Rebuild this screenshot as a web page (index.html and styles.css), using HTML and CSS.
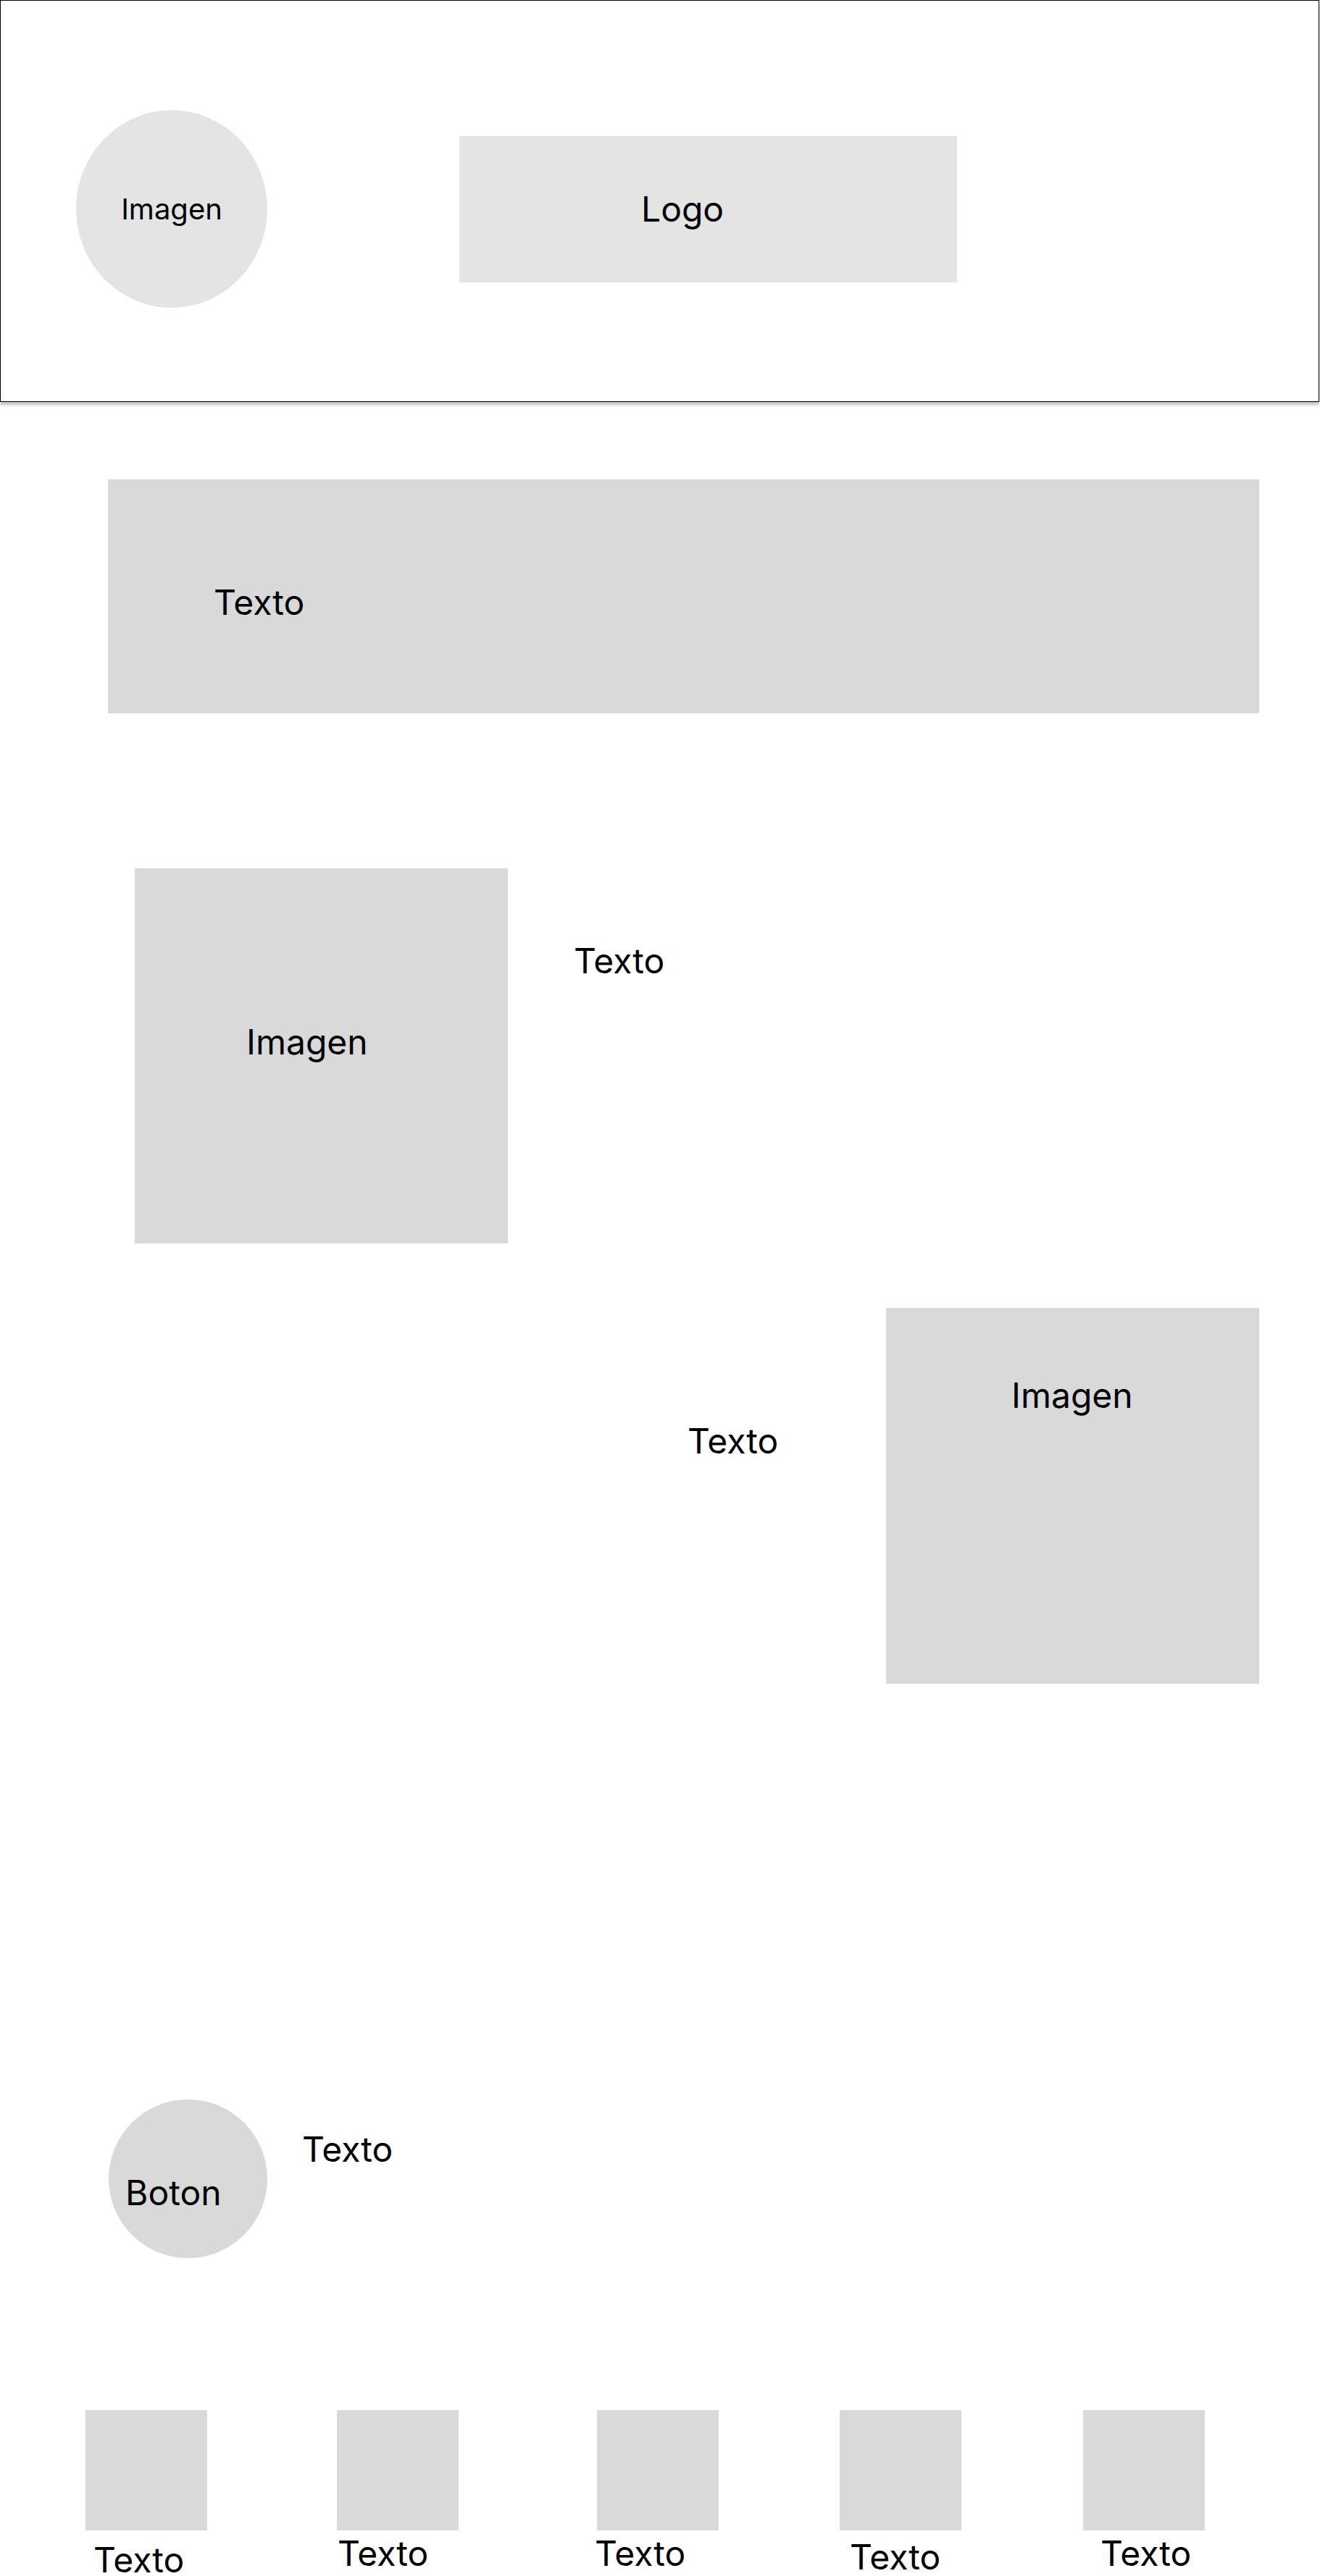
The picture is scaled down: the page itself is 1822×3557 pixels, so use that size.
FILE: index.html
```html
<!DOCTYPE html>
<html lang="es">
<head>
<meta charset="utf-8">
<title>Wireframe</title>
<link rel="stylesheet" href="styles.css">
</head>
<body>
<header class="topbar">
  <div class="avatar">Imagen</div>
  <div class="logo">Logo</div>
</header>
<main class="page">
  <section class="banner"><p class="txt">Texto</p></section>

  <section class="feature feature-left">
    <div class="media media-left"><p class="txt">Imagen</p></div>
    <p class="txt feature-text-left">Texto</p>
  </section>

  <section class="feature feature-right">
    <p class="txt feature-text-right">Texto</p>
    <div class="media media-right"><p class="txt">Imagen</p></div>
  </section>

  <section class="cta">
    <div class="cta-button"><span class="txt">Boton</span></div>
    <p class="txt cta-text">Texto</p>
  </section>

  <section class="gallery">
    <div class="gallery-item"><div class="thumb"></div><p class="txt caption">Texto</p></div>
    <div class="gallery-item"><div class="thumb"></div><p class="txt caption">Texto</p></div>
    <div class="gallery-item"><div class="thumb"></div><p class="txt caption">Texto</p></div>
    <div class="gallery-item"><div class="thumb"></div><p class="txt caption">Texto</p></div>
    <div class="gallery-item"><div class="thumb"></div><p class="txt caption">Texto</p></div>
  </section>
</main>
</body>
</html>
```

FILE: styles.css
```css
html, body {
  margin: 0;
  padding: 0;
  overflow: hidden;
  background: #fff;
}

body {
  font-family: Inter, "Noto Sans", "Liberation Sans", sans-serif;
  color: #000;
  width: 1822px;
  height: 3557px;
}

.txt {
  margin: 0;
  font-size: 48px;
  line-height: normal;
  font-weight: 400;
  white-space: nowrap;
}

/* Header */
.topbar {
  box-sizing: border-box;
  height: 555px;
  width: 1821px;
  border: 1px solid #000;
  background: #fff;
  box-shadow: 0 4px 4px rgba(0, 0, 0, 0.25);
  display: flex;
  align-items: center;
  padding: 22px 0 0 104px;
  position: relative;
  z-index: 1;
}

.avatar {
  width: 264px;
  height: 273px;
  border-radius: 50%;
  background: #e4e4e4;
  display: flex;
  align-items: center;
  justify-content: center;
  font-size: 40px;
  flex-shrink: 0;
}

.logo {
  box-sizing: border-box;
  width: 687px;
  height: 202px;
  margin-left: 265px;
  background: #e4e4e4;
  display: flex;
  align-items: center;
  padding-left: 251px;
  font-size: 48px;
  flex-shrink: 0;
}

/* Main */
.page {
  display: flex;
  flex-direction: column;
}

.banner {
  box-sizing: border-box;
  margin: 107px 0 0 149px;
  width: 1589px;
  height: 323px;
  background: #d9d9d9;
  padding: 140px 0 0 146px;
}

.feature {
  display: flex;
  align-items: flex-start;
}

.media {
  box-sizing: border-box;
  width: 515px;
  height: 518px;
  background: #d9d9d9;
  flex-shrink: 0;
}

.feature-left {
  margin-top: 214px;
  padding-left: 186px;
}

.media-left {
  padding: 210px 0 0 154px;
}

.feature-text-left {
  margin-left: 91px;
  margin-top: 98px;
}

.feature-right {
  margin-top: 89px;
  padding-left: 949px;
  padding-right: 84px;
}

.feature-text-right {
  margin-top: 154px;
}

.media-right {
  margin-left: auto;
  height: 519px;
  padding: 91px 0 0 173px;
}

/* Call to action */
.cta {
  display: flex;
  align-items: flex-start;
  margin-top: 574px;
  padding-left: 150px;
}

.cta-button {
  box-sizing: border-box;
  width: 219px;
  height: 219px;
  border-radius: 50%;
  background: #d9d9d9;
  padding: 99px 0 0 23px;
  flex-shrink: 0;
}

.cta-button .txt {
  display: block;
}

.cta-text {
  margin: 39px 0 0 48px;
}

/* Gallery */
.gallery {
  display: flex;
  align-items: flex-start;
  margin-top: 210px;
}

.gallery-item {
  display: flex;
  flex-direction: column;
  align-items: flex-start;
  width: 168px;
}

.thumb {
  width: 168px;
  height: 166px;
  background: #d9d9d9;
}

.gallery-item:nth-child(1) { margin-left: 118px; }
.gallery-item:nth-child(2) { margin-left: 179px; }
.gallery-item:nth-child(3) { margin-left: 191px; }
.gallery-item:nth-child(4) { margin-left: 167px; }
.gallery-item:nth-child(5) { margin-left: 168px; }

.gallery-item:nth-child(1) .caption { margin: 11px 0 0 11px; }
.gallery-item:nth-child(2) .caption { margin: 2px 0 0 1px; }
.gallery-item:nth-child(3) .caption { margin: 2px 0 0 -3px; }
.gallery-item:nth-child(4) .caption { margin: 7px 0 0 14px; }
.gallery-item:nth-child(5) .caption { margin: 2px 0 0 24px; }
```
